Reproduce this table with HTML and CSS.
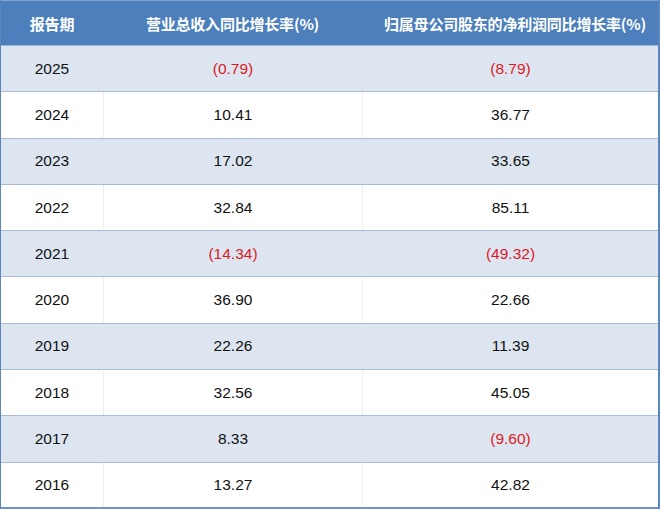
FILE: index.html
```html
<!DOCTYPE html>
<html lang="zh-CN">
<head>
<meta charset="utf-8">
<link rel="stylesheet" href="styles.css">
</head>
<body>
<div class="table">
  <div class="row head">
    <div class="cell">报告期</div>
    <div class="cell">营业总收入同比增长率(%)</div>
    <div class="cell">归属母公司股东的净利润同比增长率(%)</div>
  </div>
  <div class="row alt"><div class="cell">2025</div><div class="cell neg">(0.79)</div><div class="cell neg">(8.79)</div></div>
  <div class="row"><div class="cell">2024</div><div class="cell">10.41</div><div class="cell">36.77</div></div>
  <div class="row alt"><div class="cell">2023</div><div class="cell">17.02</div><div class="cell">33.65</div></div>
  <div class="row"><div class="cell">2022</div><div class="cell">32.84</div><div class="cell">85.11</div></div>
  <div class="row alt"><div class="cell">2021</div><div class="cell neg">(14.34)</div><div class="cell neg">(49.32)</div></div>
  <div class="row"><div class="cell">2020</div><div class="cell">36.90</div><div class="cell">22.66</div></div>
  <div class="row alt"><div class="cell">2019</div><div class="cell">22.26</div><div class="cell">11.39</div></div>
  <div class="row"><div class="cell">2018</div><div class="cell">32.56</div><div class="cell">45.05</div></div>
  <div class="row alt"><div class="cell">2017</div><div class="cell">8.33</div><div class="cell neg">(9.60)</div></div>
  <div class="row last"><div class="cell">2016</div><div class="cell">13.27</div><div class="cell">42.82</div></div>
</div>
</body>
</html>
```

FILE: styles.css
```css
html, body {
  margin: 0;
  padding: 0;
  background: #ffffff;
}

.table {
  width: 660px;
  box-sizing: border-box;
  border-left: 1px solid #5b86bd;
  border-right: 2px solid #5b86bd;
  display: flex;
  flex-direction: column;
  font-family: "Liberation Sans", Arial, "Noto Sans CJK SC", sans-serif;
  font-size: 15.5px;
  color: #111111;
}

.row {
  display: grid;
  grid-template-columns: 102px 259px 1fr;
  height: 46.3px;
  box-sizing: border-box;
  border-bottom: 1px solid #a8bcd6;
  background: #ffffff;
}

.row.alt {
  background: #dce5f0;
}

.row.last {
  border-bottom: 2px solid #6f95c6;
}

.cell {
  display: flex;
  align-items: center;
  justify-content: center;
  white-space: nowrap;
  border-left: 1px solid #eceef1;
}

.cell:first-child {
  border-left: none;
}

.row.alt .cell {
  border-left-color: #dce5f0;
}

.cell.neg {
  color: #dc1a1f;
}

.row.head {
  height: 46px;
  background: #4d7fbc;
  border-top: 1px solid #7fa3d0;
  border-bottom: 1px solid #9bb5d6;
  color: #ffffff;
  font-family: "Noto Sans CJK SC", "Liberation Sans", sans-serif;
  font-weight: 700;
  font-size: 15px;
  letter-spacing: -0.2px;
}

.row.head .cell {
  border-left: none;
  padding-top: 1px;
}

.row.head .cell:nth-child(3) {
  padding-left: 10px;
}
```
